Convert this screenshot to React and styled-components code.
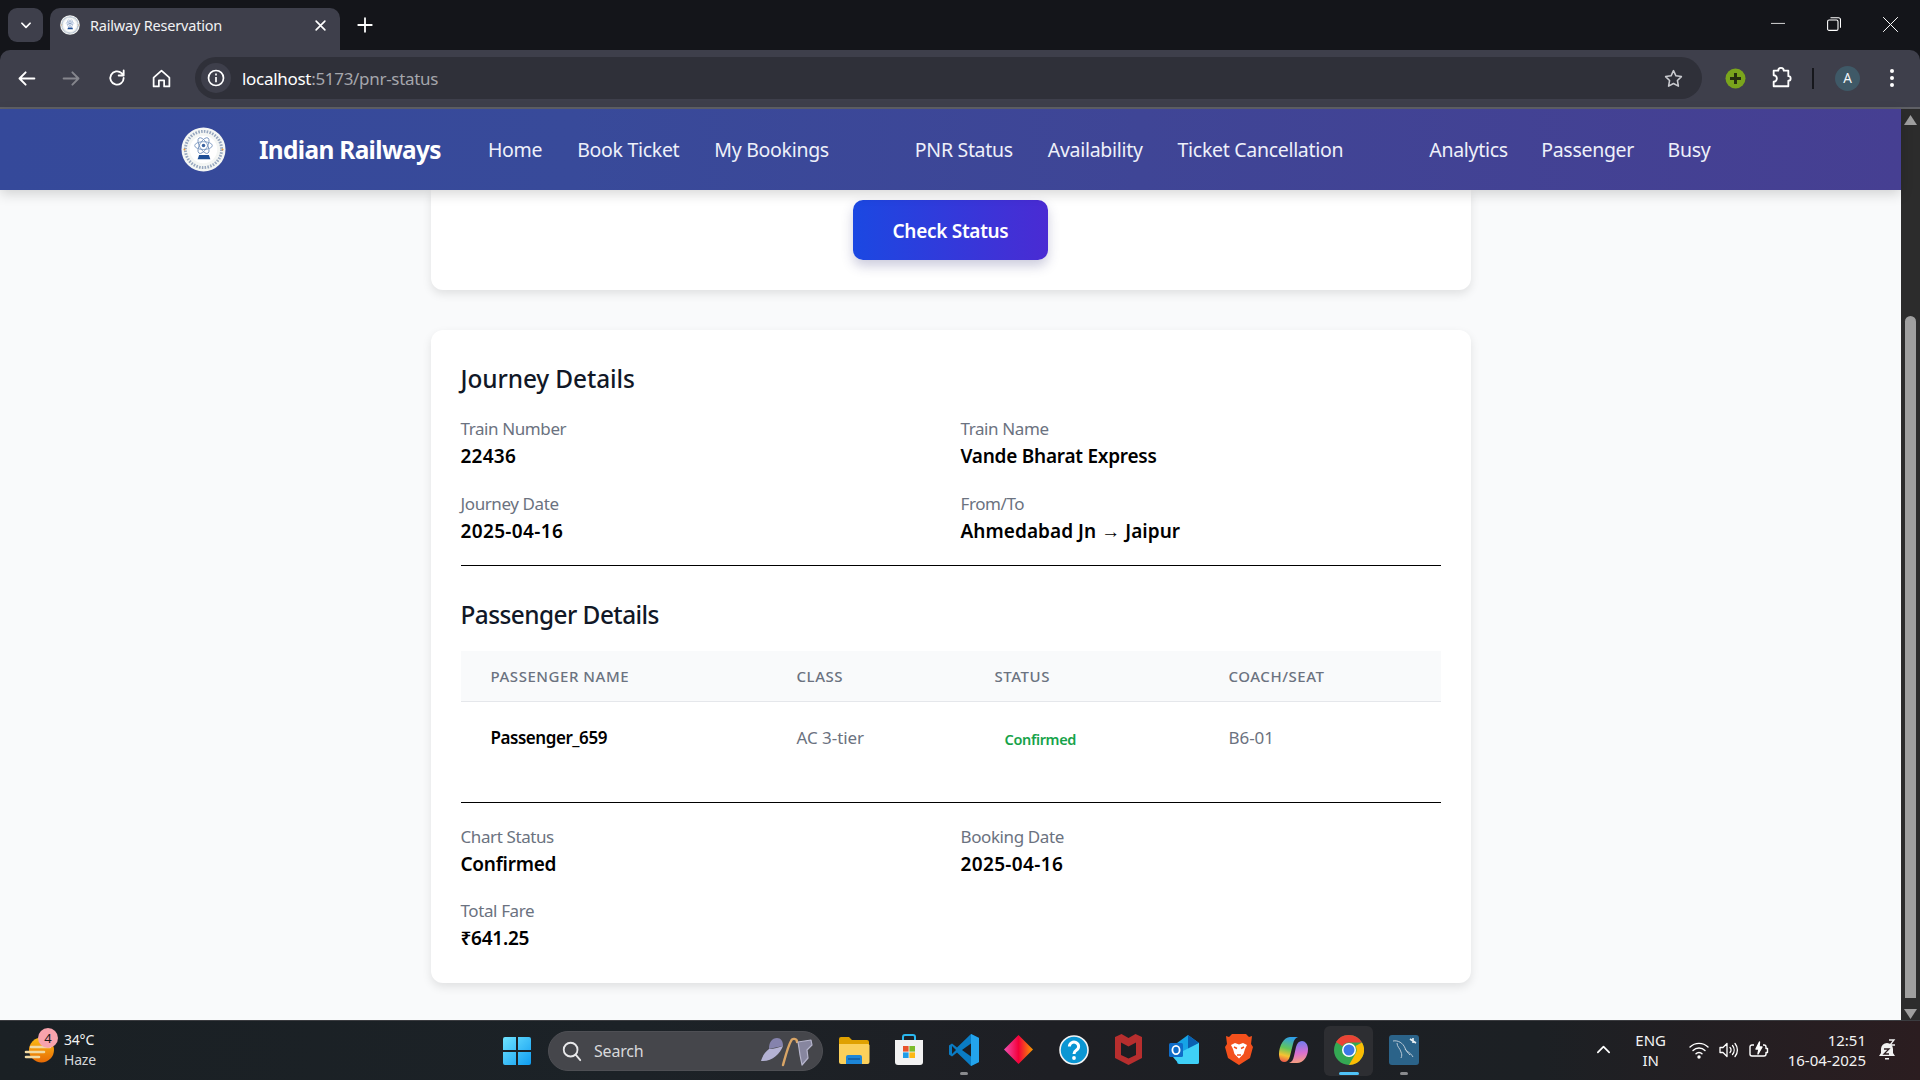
import React from "react";
import styled, { createGlobalStyle } from "styled-components";

const GlobalStyle = createGlobalStyle`
  html, body { margin: 0; padding: 0; background: #14151a; }
  * { box-sizing: border-box; }
  body { font-family: "Noto Sans", "Open Sans", sans-serif; }
`;

const Screen = styled.div`
  width: 1920px;
  height: 1080px;
  display: flex;
  flex-direction: column;
  overflow: hidden;
`;

/* browser chrome */
const TabStrip = styled.div`
  height: 50px;
  flex: none;
  background: #14151a;
  display: flex;
  align-items: flex-end;
  padding-left: 8px;
`;

const TabListButton = styled.div`
  width: 35px;
  height: 34px;
  margin-bottom: 8px;
  border-radius: 9px;
  background: #3e3f4b;
  display: flex;
  align-items: center;
  justify-content: center;
`;

const Tab = styled.div`
  width: 290px;
  height: 42px;
  margin-left: 7px;
  border-radius: 10px 10px 0 0;
  background: #3e3f4b;
  display: flex;
  align-items: center;
  padding: 0 12px 8px 10px;
  color: #f1f1f3;
  font-size: 14.5px;
  letter-spacing: -0.2px;
`;

const TabTitle = styled.span`
  flex: 1;
  margin-left: 10px;
`;

const NewTab = styled.div`
  width: 50px;
  height: 42px;
  padding: 0 0 8px 0;
  display: flex;
  align-items: center;
  justify-content: center;
`;

const WindowControls = styled.div`
  margin-left: auto;
  height: 50px;
  display: flex;
  align-items: center;
  padding: 0 2px 2px 0;
`;

const WindowButton = styled.div`
  width: 56px;
  height: 46px;
  display: flex;
  align-items: center;
  justify-content: center;
`;

const Toolbar = styled.div`
  height: 59px;
  flex: none;
  background: #3e3f4b;
  border-radius: 10px 10px 0 0;
  border-bottom: 2px solid #5f6066;
  display: flex;
  align-items: center;
  padding: 0 0 1px 4px;
`;

const ToolButton = styled.div`
  width: ${({ $w }) => $w || 45}px;
  height: 36px;
  flex: none;
  display: flex;
  align-items: center;
  justify-content: center;
`;

const Omnibox = styled.div`
  flex: none;
  width: 1507px;
  height: 42px;
  margin: 0 10px 0 11px;
  border-radius: 21px;
  background: #2f3039;
  display: flex;
  align-items: center;
  padding: 0 18px 0 6px;
`;

const InfoChip = styled.div`
  width: 30px;
  height: 30px;
  border-radius: 50%;
  background: #3e3f4b;
  display: flex;
  align-items: center;
  justify-content: center;
`;

const UrlText = styled.div`
  flex: 1;
  margin-left: 11px;
  font-size: 17px;
  letter-spacing: -0.3px;
  color: #a5a6ac;
  span { color: #fff; }
`;

const ToolDivider = styled.div`
  width: 2px;
  height: 21px;
  flex: none;
  margin: 0 21px 0 8px;
  background: #16171c;
`;

const Avatar = styled.div`
  width: 25px;
  height: 25px;
  flex: none;
  margin-right: 10px;
  border-radius: 50%;
  background: #3f5967;
  color: #f2f5f7;
  font-size: 13.5px;
  display: flex;
  align-items: center;
  justify-content: center;
`;

/* page */
const Viewport = styled.div`
  flex: 1;
  min-height: 0;
  display: flex;
`;

const PageColumn = styled.div`
  flex: 1;
  min-width: 0;
  display: flex;
  flex-direction: column;
  background: #f9fafb;
`;

const NavBar = styled.nav`
  height: 81px;
  flex: none;
  position: relative;
  z-index: 2;
  background: linear-gradient(90deg, #35499a 0%, #384a9a 30%, #3f4596 60%, #463f92 100%);
  box-shadow: 0 4px 12px rgba(0, 0, 0, 0.16);
  display: flex;
  align-items: center;
  padding-left: 181px;
`;

const Brand = styled.div`
  display: flex;
  align-items: center;
  gap: 33px;
  margin-right: 47px;
  color: #fff;
  font-size: 24.4px;
  font-weight: 700;
  letter-spacing: -0.65px;
`;

const NavGroup = styled.div`
  display: flex;
  gap: ${({ $gap }) => $gap || 35}px;
  margin-right: 86px;
`;

const NavLink = styled.a`
  color: #eef0fa;
  font-size: 19.5px;
  letter-spacing: -0.3px;
  white-space: nowrap;
`;

const Content = styled.main`
  flex: 1;
  min-height: 0;
  overflow: hidden;
  display: flex;
  flex-direction: column;
  align-items: center;
`;

const Card = styled.section`
  width: 1040px;
  flex: none;
  background: #fff;
  box-shadow: 0 4px 10px rgba(0, 0, 0, 0.1);
  border-radius: 12px;
`;

const SearchCard = styled(Card)`
  height: 100px;
  border-radius: 0 0 12px 12px;
  padding-top: 10px;
  display: flex;
  justify-content: center;
`;

const CheckButton = styled.button`
  width: 195px;
  height: 60px;
  padding: 1px 0 0;
  border: 0;
  border-radius: 10px;
  background: linear-gradient(90deg, #1b48e2, #4a2bd3);
  box-shadow: 0 6px 12px rgba(50, 50, 120, 0.25);
  color: #fff;
  font-family: inherit;
  font-size: 19px;
  font-weight: 600;
  letter-spacing: -0.3px;
`;

const ResultCard = styled(Card)`
  margin-top: 40px;
  height: 653px;
  padding: 30px 30px 0;
`;

const SectionTitle = styled.h2`
  margin: 0;
  height: 37px;
  line-height: 37px;
  font-size: 24.4px;
  font-weight: 500;
  letter-spacing: -0.1px;
  color: #111827;
`;

const InfoGrid = styled.div`
  margin-top: 19px;
  display: grid;
  grid-template-columns: 500px 1fr;
  row-gap: 21px;
`;

const InfoLabel = styled.div`
  height: 27px;
  line-height: 26px;
  font-size: 17px;
  letter-spacing: -0.4px;
  color: #6b7280;
`;

const InfoValue = styled.div`
  height: 27px;
  line-height: 27px;
  font-size: 19px;
  font-weight: 600;
  letter-spacing: ${({ $spacing }) => $spacing ?? -0.25}px;
  color: #000;
`;

const Rule = styled.hr`
  margin: ${({ $top }) => $top}px 0 0;
  border: 0;
  border-top: 1px solid #000;
`;

const PassengerTitle = styled(SectionTitle)`
  margin-top: 30px;
  letter-spacing: -0.55px;
`;

const Table = styled.table`
  margin-top: 18px;
  width: 100%;
  border-collapse: collapse;
  table-layout: fixed;
`;

const HeadCell = styled.th`
  width: ${({ $w }) => $w}px;
  height: 50px;
  padding: 0 0 0 30px;
  background: #f9fafb;
  border-bottom: 1.5px solid #e5e7eb;
  text-align: left;
  font-size: 15px;
  font-weight: 500;
  letter-spacing: 0.55px;
  text-transform: uppercase;
  color: #6b7280;
`;

const BodyCell = styled.td`
  height: 74px;
  padding: 0 0 2px 30px;
  font-size: 17px;
  letter-spacing: ${({ $strong }) => ($strong ? "-0.45px" : "-0.05px")};
  font-weight: ${({ $strong }) => ($strong ? 600 : 400)};
  color: ${({ $strong }) => ($strong ? "#000" : "#6b7280")};
`;

const StatusText = styled.span`
  display: inline-block;
  padding: 4px 10px 0;
  font-size: 14.5px;
  font-weight: 600;
  letter-spacing: -0.35px;
  color: #16a34a;
`;

const FooterGrid = styled(InfoGrid)`
  margin-top: 21px;
  row-gap: 20px;
`;

const Scrollbar = styled.div`
  width: 19px;
  flex: none;
  background: #2c2c2c;
  display: flex;
  flex-direction: column;
  align-items: center;
  padding-top: 6px;
`;

const ScrollThumb = styled.div`
  width: 11px;
  height: 682px;
  margin: 191px 0 11px;
  border-radius: 6px 6px 0 0;
  background: #9f9f9f;
`;

/* windows taskbar */
const Taskbar = styled.footer`
  height: 60px;
  flex: none;
  position: relative;
  display: flex;
  align-items: center;
  border-top: 1px solid #3b3c40;
  background: linear-gradient(90deg, #1a2024 0%, #1c2227 33%, #1e1f24 55%, #1c2024 80%, #2b1d20 100%);
  color: #f3f3f3;
`;

const Weather = styled.div`
  width: 502px;
  flex: none;
  display: flex;
  align-items: center;
  padding: 0 0 1px 24px;
`;

const WeatherIcon = styled.div`
  position: relative;
  width: 38px;
  height: 36px;
`;

const WeatherBadge = styled.span`
  position: absolute;
  top: -4px;
  left: 14px;
  width: 20px;
  height: 20px;
  border-radius: 50%;
  background: #f7a3ac;
  color: #1a1a1a;
  font-size: 13px;
  line-height: 20px;
  text-align: center;
`;

const WeatherText = styled.div`
  margin-left: 2px;
  font-size: 14px;
  line-height: 20px;
  letter-spacing: -0.2px;
  span { display: block; color: #d4d6d8; }
`;

const StartSlot = styled.div`
  width: 30px;
  height: 30px;
  flex: none;
  margin-right: 16px;
`;

const SearchPill = styled.div`
  width: 275px;
  height: 40px;
  flex: none;
  border-radius: 20px;
  background: #45464b;
  border: 1px solid #4e4f54;
  display: flex;
  align-items: center;
  padding: 0 8px 0 12px;
  font-size: 16px;
  color: #d8d9db;
  letter-spacing: -0.2px;
`;

const SearchLabel = styled.span`
  flex: 1;
  margin-left: 11px;
`;

const AppRow = styled.div`
  display: flex;
  align-items: center;
  margin-left: 3px;
`;

const AppSlot = styled.div`
  position: relative;
  width: 49px;
  height: 50px;
  margin: 0 3px;
  padding-bottom: 2px;
  display: flex;
  align-items: center;
  justify-content: center;
  border-radius: 6px;
  background: ${({ $active }) => ($active ? "#2d2e32" : "transparent")};
`;

const RunDot = styled.span`
  position: absolute;
  bottom: 1px;
  left: 50%;
  transform: translateX(-50%);
  width: ${({ $active }) => ($active ? 20 : 8)}px;
  height: 3px;
  border-radius: 2px;
  background: ${({ $active }) => ($active ? "#4fc3f7" : "#8a8b8e")};
`;

const Tray = styled.div`
  margin-left: auto;
  display: flex;
  align-items: center;
  height: 100%;
  padding: 0 24px 2px 0;
`;

const LangBox = styled.div`
  width: 50px;
  margin: 0 13px 0 14px;
  text-align: center;
  font-size: 15px;
  line-height: 20px;
`;

const TrayIcons = styled.div`
  display: flex;
  align-items: center;
  gap: 10px;
`;

const Clock = styled.div`
  margin: 0 12px 0 19px;
  text-align: right;
  font-size: 15px;
  line-height: 20px;
`;

/* drawings */
const Emblem = ({ size }) => (
  <svg width={size} height={size} viewBox="0 0 46 46">
    <circle cx="23" cy="23" r="22.5" fill="#f4f6f4" />
    <circle cx="23" cy="23" r="18.5" fill="none" stroke="#6f86a8" strokeWidth="3" strokeDasharray="1.6 1.3" opacity="0.7" />
    <circle cx="23" cy="23" r="14" fill="#fff" />
    <g fill="none" stroke="#7a97c0" strokeWidth="0.9">
      <ellipse cx="23" cy="19" rx="9" ry="4" />
      <ellipse cx="23" cy="19" rx="9" ry="4" transform="rotate(60 23 19)" />
      <ellipse cx="23" cy="19" rx="9" ry="4" transform="rotate(120 23 19)" />
    </g>
    <circle cx="23" cy="19" r="1.8" fill="#3a62a0" />
    <path d="M17 33l1.5-4.5h10l1.5 4.5z" fill="#1f4f96" />
    <circle cx="3.5" cy="23" r="1" fill="#e99a3c" />
    <circle cx="42.5" cy="23" r="1" fill="#e99a3c" />
  </svg>
);

const Line = ({ w = 20, h = 20, color = "#fff", sw = 2, d }) => (
  <svg width={w} height={h} viewBox="0 0 24 24" fill="none" stroke={color} strokeWidth={sw} strokeLinecap="round" strokeLinejoin="round">
    <path d={d} />
  </svg>
);

const StartIcon = () => (
  <svg width="30" height="30" viewBox="0 0 30 30">
    <defs>
      <linearGradient id="win" x1="0" y1="0" x2="1" y2="1">
        <stop offset="0" stopColor="#6fe3ff" />
        <stop offset="1" stopColor="#0f9cf0" />
      </linearGradient>
    </defs>
    <path d="M1 3a2 2 0 0 1 2-2h11v13H1zM16 1h11a2 2 0 0 1 2 2v11H16zM1 16h13v13H3a2 2 0 0 1-2-2zM16 16h13v11a2 2 0 0 1-2 2H16z" fill="url(#win)" />
  </svg>
);

const SearchArt = () => (
  <svg width="54" height="32" viewBox="0 0 54 32">
    <path d="M9 14c0-7 3-11 8-11 4 0 6 3 6 8-5 1-10 2-14 3z" fill="#8583ad" />
    <path d="M1 26c2-6 4-9 8-12 5 0 10-2 14-3-3 8-11 16-22 15z" fill="#b4b2d4" />
    <path d="M23 30c2-7 5-19 8-24 1-3 6-3 6 1" fill="none" stroke="#d9a566" strokeWidth="2.4" strokeLinecap="round" />
    <path d="M38 7l13-2 1 5-5 5 1 8-6 7-2-10-1-7z" fill="#87869f" stroke="#b6b5cc" strokeWidth="1.2" strokeLinejoin="round" />
  </svg>
);

const FolderIcon = () => (
  <svg width="32" height="28" viewBox="0 0 32 28">
    <path d="M1 3a2 2 0 0 1 2-2h8l3 3h15a2 2 0 0 1 2 2v4H1z" fill="#e0a100" />
    <path d="M1 8h29a1.5 1.5 0 0 1 1.5 1.5V26a2 2 0 0 1-2 2H3a2 2 0 0 1-2-2z" fill="#fbd05b" />
    <path d="M8 28v-7a2 2 0 0 1 2-2h12a2 2 0 0 1 2 2v7z" fill="#1d86d8" />
    <path d="M10 23h12" stroke="#0f4f90" strokeWidth="1.2" />
  </svg>
);

const StoreIcon = () => (
  <svg width="30" height="32" viewBox="0 0 30 32">
    <path d="M9 6V3a2 2 0 0 1 2-2h8a2 2 0 0 1 2 2v3" fill="none" stroke="#2ab7ee" strokeWidth="2" />
    <path d="M1 6h28v22a3 3 0 0 1-3 3H4a3 3 0 0 1-3-3z" fill="#f2f2f2" />
    <rect x="9" y="12" width="5.6" height="5.6" fill="#e8532b" />
    <rect x="15.4" y="12" width="5.6" height="5.6" fill="#7cbb2a" />
    <rect x="9" y="18.4" width="5.6" height="5.6" fill="#1e9ce8" />
    <rect x="15.4" y="18.4" width="5.6" height="5.6" fill="#fdb813" />
  </svg>
);

const VsCodeIcon = () => (
  <svg width="30" height="32" viewBox="0 0 30 32">
    <path d="M22 0l8 4v24l-8 4-14-13.5-5 4-3-2v-9l3-2 5 4z" fill="#0a7cc4" />
    <path d="M22 0l8 4v24l-8 4z" fill="#23a3ec" />
    <path d="M22 9.500L13 16l9 6.500z" fill="#1c1e23" />
    <path d="M3 12v8l4-4z" fill="#1c1e23" />
  </svg>
);

const DiamondIcon = () => (
  <svg width="31" height="31" viewBox="0 0 31 31">
    <defs>
      <linearGradient id="dia" x1="0" y1="0" x2="1" y2="0">
        <stop offset="0" stopColor="#f050b4" />
        <stop offset="0.5" stopColor="#f4003a" />
        <stop offset="1" stopColor="#f79a00" />
      </linearGradient>
    </defs>
    <path d="M15.5 1L30 15.5 15.5 30 1 15.5z" fill="url(#dia)" />
  </svg>
);

const HelpIcon = () => (
  <svg width="30" height="30" viewBox="0 0 30 30">
    <circle cx="15" cy="15" r="14" fill="#0b96d3" stroke="#f4f4f4" strokeWidth="1.6" />
    <path d="M10.4 11.5a4.6 4.4 0 1 1 7.2 3.6c-1.7 1.2-2.6 1.9-2.6 3.8" fill="none" stroke="#fff" strokeWidth="3" />
    <circle cx="15" cy="23" r="1.9" fill="#fff" />
  </svg>
);

const McAfeeIcon = () => (
  <svg width="27" height="31" viewBox="0 0 27 31">
    <path d="M0 3l6.5-3 7 4 7-4L27 3v21l-13.5 7L0 24z" fill="#b72e2e" />
    <path d="M6 8.500l7.500 4 7.500-4V21l-7.500 3.500L6 21z" fill="#1c1e23" />
  </svg>
);

const OutlookIcon = () => (
  <svg width="30" height="29" viewBox="0 0 30 29">
    <path d="M8 8l11-8 11 8v19a2 2 0 0 1-2 2H10a2 2 0 0 1-2-2z" fill="#16a3e6" />
    <path d="M19 0l11 8-11 7z" fill="#0a5fb0" />
    <path d="M4 22l10-6 16-8v19a2 2 0 0 1-2 2H10z" fill="#3fd0f7" />
    <rect x="0" y="8" width="14" height="14" rx="1.5" fill="#0f6cc8" />
    <ellipse cx="7" cy="15" rx="3.6" ry="4.2" fill="none" stroke="#fff" strokeWidth="1.8" />
  </svg>
);

const BraveIcon = () => (
  <svg width="28" height="31" viewBox="0 0 28 31">
    <path d="M7 0h14l3 3 3-1-1 8 2 3-3 11-11 7-11-7-3-11 2-3-1-8 3 1z" fill="#f3501c" />
    <path d="M6 11l4-2 4 1.500 4-1.500 4 2-2 4-1.500 5-4.500 4.500L9.500 20 8 15z" fill="#fff" />
    <path d="M9 13l3 1.500M19 13l-3 1.500M12 21h4" stroke="#f3501c" strokeWidth="1.5" />
  </svg>
);

const CopilotIcon = () => (
  <svg width="29" height="28" viewBox="0 0 29 28">
    <defs>
      <linearGradient id="cpa" x1="0.5" y1="0" x2="0.3" y2="1">
        <stop offset="0" stopColor="#2f9fe8" />
        <stop offset="0.45" stopColor="#62c65a" />
        <stop offset="0.75" stopColor="#f7c331" />
        <stop offset="1" stopColor="#ec5a4c" />
      </linearGradient>
      <linearGradient id="cpb" x1="0.5" y1="0" x2="0.6" y2="1">
        <stop offset="0" stopColor="#6d7cf0" />
        <stop offset="0.55" stopColor="#d86fd0" />
        <stop offset="1" stopColor="#f7a07a" />
      </linearGradient>
    </defs>
    <path d="M11 1h8c-3 1-4 3-5 7l-3 12c-1 4-3 6-6 6-3 0-5-3-5-8C0 10 5 1 11 1z" fill="url(#cpa)" />
    <path d="M18 27h-8c3-1 4-3 5-7l2-9c1-4 3-6 6-6 3 0 6 3 6 8 0 8-5 14-11 14z" fill="url(#cpb)" />
  </svg>
);

const ChromeIcon = () => (
  <svg width="30" height="30" viewBox="0 0 30 30">
    <circle cx="15" cy="15" r="15" fill="#34a853" />
    <path d="M15 0a15 15 0 0 1 13 7.500H15a7.500 7.500 0 0 0-6.500 3.750L2 7A15 15 0 0 1 15 0z" fill="#ea4335" />
    <path d="M28 7.500A15 15 0 0 1 15 30l6.500-11.250A7.500 7.500 0 0 0 21.500 11z" fill="#fbbc04" />
    <circle cx="15" cy="15" r="7" fill="#fff" />
    <circle cx="15" cy="15" r="5.5" fill="#3b78e7" />
  </svg>
);

const MysqlIcon = () => (
  <svg width="30" height="30" viewBox="0 0 30 30">
    <rect width="30" height="30" rx="3" fill="#2b6389" />
    <path d="M4 6c5-1 10 2 12 7 1 3 3 5 5 7M8 8c0 4 3 5 4 9 1 2 1 4 0 6M16 14c2 3 5 3 8 8" fill="none" stroke="#c7d3dc" strokeWidth="0.9" />
    <path d="M21 4l6 4M24 3v5" stroke="#e8eef2" strokeWidth="1.6" />
  </svg>
);

const taskApps = [
  { key: "folder", icon: <FolderIcon /> },
  { key: "store", icon: <StoreIcon /> },
  { key: "code", icon: <VsCodeIcon />, running: true },
  { key: "diamond", icon: <DiamondIcon /> },
  { key: "help", icon: <HelpIcon /> },
  { key: "mcafee", icon: <McAfeeIcon /> },
  { key: "outlook", icon: <OutlookIcon /> },
  { key: "brave", icon: <BraveIcon /> },
  { key: "copilot", icon: <CopilotIcon /> },
  { key: "chrome", icon: <ChromeIcon />, running: true, active: true },
  { key: "mysql", icon: <MysqlIcon />, running: true },
];

const navGroups = [
  { items: ["Home", "Book Ticket", "My Bookings"] },
  { items: ["PNR Status", "Availability", "Ticket Cancellation"] },
  { items: ["Analytics", "Passenger", "Busy"], gap: 33.5 },
];

const Info = ({ label, value, spacing }) => (
  <div>
    <InfoLabel>{label}</InfoLabel>
    <InfoValue $spacing={spacing}>{value}</InfoValue>
  </div>
);

export default function App() {
  return (
    <Screen>
      <GlobalStyle />

      <TabStrip>
        <TabListButton>
          <Line w={14} h={14} sw={3} d="M5 9l7 7 7-7" />
        </TabListButton>
        <Tab>
          <Emblem size={20} />
          <TabTitle>Railway Reservation</TabTitle>
          <Line w={15} h={15} sw={2.6} d="M5 5l14 14M19 5L5 19" />
        </Tab>
        <NewTab>
          <Line w={18} h={18} sw={2.4} d="M12 3v18M3 12h18" />
        </NewTab>
        <WindowControls>
          <WindowButton>
            <Line w={14} h={14} sw={1.4} d="M0 11h24" />
          </WindowButton>
          <WindowButton>
            <svg width="14" height="14" viewBox="0 0 14 14" fill="none" stroke="#fff" strokeWidth="1.1">
              <rect x="0.6" y="3" width="10.4" height="10.4" rx="1.5" />
              <path d="M3.5 0.8h8a2 2 0 0 1 2 2v8" />
            </svg>
          </WindowButton>
          <WindowButton>
            <Line w={17} h={17} sw={1.4} d="M2 2l20 20M22 2L2 22" />
          </WindowButton>
        </WindowControls>
      </TabStrip>

      <Toolbar>
        <ToolButton>
          <Line w={21} h={21} sw={2.2} d="M21 12H4M11 5l-7 7 7 7" />
        </ToolButton>
        <ToolButton>
          <Line w={21} h={21} sw={2.2} color="#85868d" d="M3 12h17M13 5l7 7-7 7" />
        </ToolButton>
        <ToolButton>
          <Line w={20} h={20} sw={2.2} d="M20 12a8 8 0 1 1-2.5-5.800L20 9M20 3v6h-6" />
        </ToolButton>
        <ToolButton>
          <Line w={21} h={21} sw={2} d="M3 11l9-8 9 8v10h-6v-7H9v7H3z" />
        </ToolButton>
        <Omnibox>
          <InfoChip>
            <svg width="18" height="18" viewBox="0 0 18 18" fill="none" stroke="#fff" strokeWidth="1.7">
              <circle cx="9" cy="9" r="7.5" />
              <path d="M9 8v5.200M9 4.600v1.800" />
            </svg>
          </InfoChip>
          <UrlText>
            <span>localhost</span>:5173/pnr-status
          </UrlText>
          <Line w={21} h={21} sw={1.8} color="#c9cacf" d="M12 3l2.800 5.900 6.200.9-4.500 4.500 1.100 6.400L12 17.700l-5.600 3 1.100-6.400L3 9.800l6.200-.9z" />
        </Omnibox>
        <ToolButton $w={46}>
          <svg width="21" height="21" viewBox="0 0 21 21">
            <circle cx="10.5" cy="10.5" r="10" fill="#7aa51c" />
            <path d="M10.500 5v11M5 10.500h11" stroke="#26300f" strokeWidth="3" />
          </svg>
        </ToolButton>
        <ToolButton $w={46}>
          <Line w={22} h={22} sw={2} d="M4 4h5a3 3 0 0 1 6 0h5v6a2.500 2.500 0 0 1 0 5v6H4v-5a3 3 0 0 0 0-7z" />
        </ToolButton>
        <ToolDivider />
        <Avatar>A</Avatar>
        <ToolButton $w={43}>
          <svg width="6" height="20" viewBox="0 0 6 20" fill="#fff">
            <circle cx="3" cy="3" r="2" />
            <circle cx="3" cy="10" r="2" />
            <circle cx="3" cy="17" r="2" />
          </svg>
        </ToolButton>
      </Toolbar>

      <Viewport>
        <PageColumn>
          <NavBar>
            <Brand>
              <Emblem size={45} />
              Indian Railways
            </Brand>
            {navGroups.map((group) => (
              <NavGroup key={group.items[0]} $gap={group.gap}>
                {group.items.map((item) => (
                  <NavLink key={item}>{item}</NavLink>
                ))}
              </NavGroup>
            ))}
          </NavBar>

          <Content>
            <SearchCard>
              <CheckButton>Check Status</CheckButton>
            </SearchCard>

            <ResultCard>
              <SectionTitle>Journey Details</SectionTitle>
              <InfoGrid>
                <Info label="Train Number" value="22436" spacing={0.25} />
                <Info label="Train Name" value="Vande Bharat Express" />
                <Info label="Journey Date" value="2025-04-16" spacing={0.35} />
                <Info label="From/To" value="Ahmedabad Jn → Jaipur" spacing={0.05} />
              </InfoGrid>
              <Rule $top={20} />

              <PassengerTitle>Passenger Details</PassengerTitle>
              <Table>
                <thead>
                  <tr>
                    <HeadCell $w={306}>Passenger Name</HeadCell>
                    <HeadCell $w={198}>Class</HeadCell>
                    <HeadCell $w={234}>Status</HeadCell>
                    <HeadCell>Coach/Seat</HeadCell>
                  </tr>
                </thead>
                <tbody>
                  <tr>
                    <BodyCell $strong>Passenger_659</BodyCell>
                    <BodyCell>AC 3-tier</BodyCell>
                    <BodyCell>
                      <StatusText>Confirmed</StatusText>
                    </BodyCell>
                    <BodyCell>B6-01</BodyCell>
                  </tr>
                </tbody>
              </Table>
              <Rule $top={27} />

              <FooterGrid>
                <Info label="Chart Status" value="Confirmed" />
                <Info label="Booking Date" value="2025-04-16" spacing={0.35} />
                <Info label="Total Fare" value="₹641.25" />
              </FooterGrid>
            </ResultCard>
          </Content>
        </PageColumn>

        <Scrollbar>
          <svg width="13" height="10" viewBox="0 0 13 10">
            <path d="M6.5 0L13 10H0z" fill="#9f9f9f" />
          </svg>
          <ScrollThumb />
          <svg width="13" height="10" viewBox="0 0 13 10">
            <path d="M0 0h13L6.5 10z" fill="#9f9f9f" />
          </svg>
        </Scrollbar>
      </Viewport>

      <Taskbar>
        <Weather>
          <WeatherIcon>
            <svg width="32" height="36" viewBox="0 0 32 36">
              <defs>
                <linearGradient id="sun" x1="0" y1="0" x2="0" y2="1">
                  <stop offset="0" stopColor="#fbbd14" />
                  <stop offset="1" stopColor="#e76a05" />
                </linearGradient>
              </defs>
              <circle cx="17.5" cy="18" r="12.5" fill="url(#sun)" />
              <path d="M7 15h19M2 20h18M2 25h13" stroke="#f1d9a2" strokeWidth="2.6" strokeLinecap="round" />
            </svg>
            <WeatherBadge>4</WeatherBadge>
          </WeatherIcon>
          <WeatherText>
            34°C
            <span>Haze</span>
          </WeatherText>
        </Weather>
        <StartSlot>
          <StartIcon />
        </StartSlot>
        <SearchPill>
          <Line w={22} h={22} sw={2} color="#e8e8ea" d="M10.5 3a7.500 7.500 0 1 0 0 15 7.500 7.500 0 0 0 0-15zM16 16l5 6" />
          <SearchLabel>Search</SearchLabel>
          <SearchArt />
        </SearchPill>
        <AppRow>
          {taskApps.map((app) => (
            <AppSlot key={app.key} $active={app.active}>
              {app.icon}
              {app.running && <RunDot $active={app.active} />}
            </AppSlot>
          ))}
        </AppRow>
        <Tray>
          <Line w={17} h={17} sw={2.4} d="M4 16l8-8 8 8" />
          <LangBox>
            ENG
            <br />
            IN
          </LangBox>
          <TrayIcons>
            <svg width="20" height="18" viewBox="0 0 20 18" fill="none" stroke="#fff" strokeWidth="1.4" strokeLinecap="round">
              <path d="M1 6a13 13 0 0 1 18 0M4 9.500a8.500 8.500 0 0 1 12 0M7 12.800a4 4 0 0 1 6 0" />
              <circle cx="10" cy="16" r="1" fill="#fff" />
            </svg>
            <svg width="20" height="18" viewBox="0 0 20 18" fill="none" stroke="#fff" strokeWidth="1.3" strokeLinecap="round" strokeLinejoin="round">
              <path d="M1 6.500v5h3l4 4v-13l-4 4z" />
              <path d="M11 6.500a3.500 3.500 0 0 1 0 5M13.500 4.500a7 7 0 0 1 0 9M16 2.500a10 10 0 0 1 0 13" />
            </svg>
            <svg width="20" height="18" viewBox="0 0 20 18" fill="none" stroke="#fff" strokeWidth="1.4" strokeLinejoin="round">
              <path d="M5 4H3a2 2 0 0 0-2 2v7a2 2 0 0 0 2 2h12a2 2 0 0 0 2-2v-1.500h1.500v-4H17V6a2 2 0 0 0-2-2h-1" />
              <path d="M10.500 1L7 8h3l-1 5 4-7h-3z" fill="#fff" />
            </svg>
          </TrayIcons>
          <Clock>
            12:51
            <br />
            16-04-2025
          </Clock>
          <svg width="18" height="22" viewBox="0 0 18 22">
            <path d="M9 4a6 6 0 0 0-6 6v4l-2 3h16l-2-3v-4a6 6 0 0 0-6-6z" fill="#f1f1f1" />
            <path d="M7 19h4v1.500H7z" fill="#f1f1f1" />
            <path d="M11 1h5l-4 5h5" fill="none" stroke="#f1f1f1" strokeWidth="1.3" />
            <path d="M6 10h5l-5 5h5" fill="none" stroke="#2b1d20" strokeWidth="1.3" />
          </svg>
        </Tray>
      </Taskbar>
    </Screen>
  );
}
